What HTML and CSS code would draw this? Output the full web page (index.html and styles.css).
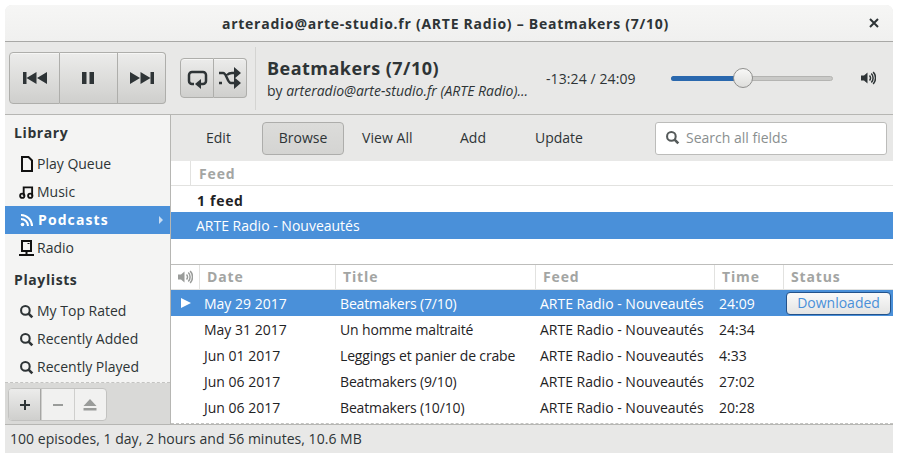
FILE: index.html
```html
<!DOCTYPE html>
<html lang="en">
<head>
<meta charset="utf-8">
<title>Rhythmbox</title>
<link rel="stylesheet" href="styles.css">
</head>
<body>
<svg class="defs" width="0" height="0">
  <symbol id="i-search" viewBox="0 0 16 16"><circle cx="6.8" cy="6.8" r="4.6" fill="none" stroke="currentColor" stroke-width="2.2"/><path d="M10.2 10.2l4 4" stroke="currentColor" stroke-width="2.8" fill="none"/></symbol>
  <symbol id="i-vol" viewBox="0 0 16 16"><path d="M1 5.5h3L7.5 2.5v11L4 10.500H1z" fill="currentColor"/><path d="M9.500 5.500a3.500 3.500 0 0 1 0 5M11.300 3.500a6.500 6.500 0 0 1 0 9M13.200 2a9 9 0 0 1 0 12" fill="none" stroke="currentColor" stroke-width="1.500"/></symbol>
</svg>
<div class="window">
  <header class="titlebar">
    <span class="title-text">arteradio@arte-studio.fr (ARTE Radio) – Beatmakers (7/10)</span>
    <svg class="close" width="10" height="10" viewBox="0 0 10 10"><path d="M1 1l8 8M9 1l-8 8" stroke="#2e3436" stroke-width="2"/></svg>
  </header>
  <section class="toolbar">
    <div class="btn-group transport">
      <button class="btn big w50"><svg width="24" height="12" viewBox="0 0 24 12"><path d="M0 0h3.500v12H0zM3.500 6l10-6v12zM14 6l10-6v12z" fill="#2e3436"/></svg></button>
      <button class="btn big w58"><svg width="12" height="12" viewBox="0 0 12 12"><path d="M0 0h4.500v12H0zM7.500 0H12v12H7.500z" fill="#2e3436"/></svg></button>
      <button class="btn big w50"><svg width="24" height="12" viewBox="0 0 24 12"><path d="M0 0l10 6-10 6zM10.500 0l10 6-10 6zM20.500 0H24v12h-3.500z" fill="#2e3436"/></svg></button>
    </div>
    <div class="btn-group modes">
      <button class="btn mode w34"><svg width="21" height="21" viewBox="0 0 21 21"><path d="M7 16H5a3 3 0 0 1-3-3V7a3 3 0 0 1 3-3h11a3 3 0 0 1 3 3v6a3 3 0 0 1-3 3h-3" fill="none" stroke="#2e3436" stroke-width="2.500"/><path d="M14 11v10l-6-5z" fill="#2e3436"/></svg></button>
      <button class="btn mode w33"><svg width="22" height="22" viewBox="0 0 22 22"><path d="M0 6h4c4 0 4 10 8 10h4M0 16h3M8 8c1-1 2-2 5-2h3" fill="none" stroke="#2e3436" stroke-width="2.400"/><path d="M15 0l7 6-7 6zM15 10l7 6-7 6z" fill="#2e3436"/></svg></button>
    </div>
    <div class="vsep"></div>
    <div class="now">
      <div class="now-title">Beatmakers (7/10)</div>
      <div class="now-sub">by <em>arteradio@arte-studio.fr (ARTE Radio)...</em></div>
    </div>
    <div class="time">-13:24 / 24:09</div>
    <div class="slider"><div class="slider-fill"></div><div class="slider-knob"></div></div>
    <svg class="vol" width="16" height="16"><use href="#i-vol"/></svg>
  </section>
  <div class="middle">
    <aside class="sidebar">
      <div class="side-list">
        <div class="side-head first">Library</div>
        <div class="side-item"><svg width="15" height="16" viewBox="0 0 15 16"><path d="M3 1h6.500L13 4.500V15H3z" fill="none" stroke="#111" stroke-width="2"/></svg>Play Queue</div>
        <div class="side-item"><svg width="15" height="16" viewBox="0 0 16 16"><circle cx="3.500" cy="12" r="2.300" fill="none" stroke="#111" stroke-width="2"/><circle cx="12" cy="12" r="2.300" fill="none" stroke="#111" stroke-width="2"/><path d="M5 12V3h9v9" fill="none" stroke="#111" stroke-width="2"/></svg>Music</div>
        <div class="side-item selected"><svg width="14" height="14" viewBox="0 0 14 14"><circle cx="2.500" cy="11.500" r="1.800" fill="#fff"/><path d="M1 6a7 7 0 0 1 7 7M1 2a11 11 0 0 1 11 11" fill="none" stroke="#fff" stroke-width="2"/></svg><b>Podcasts</b><span class="arrow"></span></div>
        <div class="side-item"><svg width="15" height="16" viewBox="0 0 15 16"><path d="M3 1h9v10H3z" fill="none" stroke="#111" stroke-width="2"/><path d="M0 15h15M7.500 12v3" stroke="#111" stroke-width="2"/><path d="M8.500 3.500h2" stroke="#111"/></svg>Radio</div>
        <div class="side-head second">Playlists</div>
        <div class="side-item"><svg class="s-ic" width="15" height="15"><use href="#i-search"/></svg>My Top Rated</div>
        <div class="side-item"><svg class="s-ic" width="15" height="15"><use href="#i-search"/></svg>Recently Added</div>
        <div class="side-item"><svg class="s-ic" width="15" height="15"><use href="#i-search"/></svg>Recently Played</div>
      </div>
      <div class="side-tools">
        <div class="tool-group">
          <button class="tool on"><svg width="12" height="12" viewBox="0 0 12 12"><path d="M6 1v10M1 6h10" stroke="#2e3436" stroke-width="2"/></svg></button>
          <button class="tool"><svg width="12" height="12" viewBox="0 0 12 12"><path d="M1 6h10" stroke="#9a9c9a" stroke-width="2"/></svg></button>
          <button class="tool"><svg width="14" height="12" viewBox="0 0 14 12"><path d="M7 0l6.500 7H.5zM.5 9h13v2.500H.5z" fill="#9a9c9a"/></svg></button>
        </div>
      </div>
    </aside>
    <main class="content">
      <div class="browse-bar">
        <nav class="tabs">
          <span class="tab t-edit">Edit</span>
          <span class="tab active">Browse</span>
          <span class="tab t-all">View All</span>
          <span class="tab t-add">Add</span>
          <span class="tab t-upd">Update</span>
        </nav>
        <div class="search"><svg width="15" height="15"><use href="#i-search"/></svg><span>Search all fields</span></div>
      </div>
      <div class="feed-pane">
        <div class="feed-head"><span class="fh-blank"></span><span class="col-title">Feed</span></div>
        <div class="feed-row count">1 feed</div>
        <div class="feed-row picked">ARTE Radio - Nouveautés</div>
      </div>
      <div class="tracks">
        <div class="tr head">
          <span class="c c0"><svg width="16" height="16"><use href="#i-vol"/></svg></span>
          <span class="c c1 col-title">Date</span><span class="c c2 col-title">Title</span><span class="c c3 col-title">Feed</span><span class="c c4 col-title">Time</span><span class="c c5 col-title">Status</span>
        </div>
        <div class="tr row playing">
          <span class="c c0"><svg width="10" height="10" viewBox="0 0 10 10"><path d="M0 0l10 5-10 5z" fill="#fff"/></svg></span>
          <span class="c c1">May 29 2017</span><span class="c c2">Beatmakers (7/10)</span><span class="c c3">ARTE Radio - Nouveautés</span><span class="c c4">24:09</span><span class="c c5"><span class="status-btn">Downloaded</span></span>
        </div>
        <div class="tr row"><span class="c c0"></span><span class="c c1">May 31 2017</span><span class="c c2">Un homme maltraité</span><span class="c c3">ARTE Radio - Nouveautés</span><span class="c c4">24:34</span><span class="c c5"></span></div>
        <div class="tr row"><span class="c c0"></span><span class="c c1">Jun 01 2017</span><span class="c c2">Leggings et panier de crabe</span><span class="c c3">ARTE Radio - Nouveautés</span><span class="c c4">4:33</span><span class="c c5"></span></div>
        <div class="tr row"><span class="c c0"></span><span class="c c1">Jun 06 2017</span><span class="c c2">Beatmakers (9/10)</span><span class="c c3">ARTE Radio - Nouveautés</span><span class="c c4">27:02</span><span class="c c5"></span></div>
        <div class="tr row"><span class="c c0"></span><span class="c c1">Jun 06 2017</span><span class="c c2">Beatmakers (10/10)</span><span class="c c3">ARTE Radio - Nouveautés</span><span class="c c4">20:28</span><span class="c c5"></span></div>
      </div>
    </main>
  </div>
  <footer class="statusbar">100 episodes, 1 day, 2 hours and 56 minutes, 10.6 MB</footer>
</div>
</body>
</html>
```
FILE: styles.css
```css
* { box-sizing: border-box; }
html, body { margin: 0; padding: 0; background: #fff; }
body { width: 902px; height: 462px; padding: 5px 9px 9px 5px; overflow: hidden; font-family: "Open Sans", "Noto Sans", sans-serif; font-size: 14px; color: #2e3436; }
.defs { position: absolute; }
.window { width: 888px; height: 448px; display: flex; flex-direction: column; background: #e8e8e7; border-radius: 7px 7px 0 0; overflow: hidden; }
button { font: inherit; padding: 0; margin: 0; }

.titlebar { height: 37px; flex: none; display: flex; align-items: center; justify-content: center; position: relative; background: linear-gradient(#f6f6f5, #f0f0ef); border-bottom: 1px solid #a8a8a6; }
.title-text { font-family: "Open Sans", sans-serif; font-weight: 700; font-size: 14px; color: #2e3436; letter-spacing: .74px; margin-right: 7px; }
.close { position: absolute; right: 14px; top: 13px; }

.toolbar { height: 73px; flex: none; display: flex; align-items: center; padding-left: 4px; background: #e8e8e7; border-bottom: 1px solid #b6b6b3; }
.btn-group { display: flex; flex: none; }
.btn { display: flex; align-items: center; justify-content: center; background: linear-gradient(#ececeb, #dcdcda 55%, #cfcfcd); border: 1px solid #aeaeab; border-left-width: 0; box-shadow: inset 0 1px #f6f6f5; }
.btn:first-child { border-left-width: 1px; border-radius: 4px 0 0 4px; }
.btn:last-child { border-radius: 0 4px 4px 0; }
.big { height: 52px; }
.mode { height: 40px; }
.w50 { width: 51px; }
.w58 { width: 58px; padding-right: 1px; }
.big.w50:last-child { width: 48px; }
.w34 { width: 34px; }
.w33 { width: 33px; }
.modes { margin-left: 14px; }
.vsep { width: 1px; height: 63px; background: #d4d4d2; margin-left: 8px; }
.now { width: 290px; padding-left: 11px; flex: none; white-space: nowrap; }
.now-title { font-family: "Open Sans", sans-serif; font-weight: 700; font-size: 18px; line-height: 24px; letter-spacing: .47px; color: #2e3436; margin-top: 1px; }
.now-sub { font-size: 14px; line-height: 20px; letter-spacing: -.01px; color: #2e3436; margin-top: 1px; }
.time { width: 125px; flex: none; font-size: 14px; color: #2e3436; letter-spacing: .1px; padding-top: 1px; }
.slider { position: relative; width: 162px; height: 5px; flex: none; background: #c9c9c7; border: 1px solid #b4b4b2; border-radius: 3px; }
.slider-fill { position: absolute; left: -1px; top: -1px; height: 5px; width: 66px; background: #2a68ae; border-radius: 3px 0 0 3px; }
.slider-knob { position: absolute; left: 61px; top: -9px; width: 20px; height: 20px; border-radius: 50%; background: linear-gradient(#f8f8f7, #dededc); border: 1px solid #8f8f8d; }
.vol { margin-left: 27px; color: #2e3436; flex: none; }

.middle { flex: 1; display: flex; min-height: 0; }
.sidebar { width: 166px; flex: none; display: flex; flex-direction: column; background: #f4f4f3; border-right: 1px solid #b6b6b3; }
.side-list { flex: 1; border-bottom: 1px dashed #c4c4c2; }
.side-head { font-family: "Open Sans", sans-serif; font-weight: 700; font-size: 14px; letter-spacing: .6px; height: 28px; line-height: 28px; padding-left: 9px; color: #2e3436; margin-top: 4px; }
.side-head.first { margin-top: 4px; height: 31px; line-height: 27px; }
.side-head.second { margin-top: 5px; height: 30px; line-height: 26px; }
.side-item { height: 28px; display: flex; align-items: center; gap: 3px; padding-left: 14px; color: #2e3436; position: relative; line-height: 1; }
.side-item svg { flex: none; }
.side-item .s-ic { color: #2e3436; }
.side-item.selected { background: #4a90d9; color: #fff; padding-left: 15px; gap: 4px; }
.side-item b { font-family: "Open Sans", sans-serif; font-size: 14px; font-weight: 700; letter-spacing: 1.1px; }
.arrow { position: absolute; right: 7px; top: 10px; border-left: 4px solid #c8dcf2; border-top: 4px solid transparent; border-bottom: 4px solid transparent; }
.side-tools { height: 41px; flex: none; background: #d9d9d7; padding: 5px 0 0 3px; }
.tool-group { display: flex; width: 99px; height: 33px; border: 1px solid #c2c2c0; border-radius: 4px; overflow: hidden; background: #f1f1f0; }
.tool { flex: 1; display: flex; align-items: center; justify-content: center; background: transparent; border: 0; border-left: 1px solid #cfcfcd; }
.tool:first-child { border-left: 0; }
.tool.on { background: linear-gradient(#ececeb, #cfcfcd); border-right: 1px solid #a6a6a4; }

.content { flex: 1; min-width: 0; display: flex; flex-direction: column; background: #fff; border-bottom: 1px dashed #c4c4c2; }
.browse-bar { height: 46px; flex: none; display: flex; align-items: center; justify-content: space-between; padding: 0 6px 0 0; background: #e8e8e7; }
.tabs { display: flex; align-items: center; padding-left: 35px; }
.tab { height: 33px; line-height: 31px; color: #2e3436; flex: none; }
.t-edit { width: 56px; }
.active { width: 82px; line-height: 29px; text-align: center; background: linear-gradient(#dcdcda, #d4d4d2); border: 1px solid #adadab; border-radius: 4px; margin-right: 18px; }
.t-all { width: 98px; letter-spacing: .05px; }
.t-add { width: 75px; }
.search { width: 232px; height: 33px; display: flex; align-items: center; gap: 6px; padding-left: 9px; padding-bottom: 1px; background: #fff; border: 1px solid #bcbcba; border-radius: 3px; color: #8a8f8f; }
.search svg { color: #555a5a; flex: none; }

.feed-pane { height: 104px; flex: none; border-bottom: 1px solid #bdbdbb; }
.col-title { font-family: "Open Sans", sans-serif; font-weight: 700; font-size: 14px; color: #a3a5a3; letter-spacing: .85px; }
.feed-head { height: 25px; display: flex; align-items: center; border-bottom: 1px solid #e2e2e0; }
.fh-blank { width: 20px; height: 100%; border-right: 1px solid #e2e2e0; margin-right: 8px; }
.feed-row { line-height: 26px; height: 26px; padding-left: 26px; }
.count { font-family: "Open Sans", sans-serif; font-weight: 700; font-size: 14px; letter-spacing: .7px; color: #1f2325; line-height: 29px; }
.picked { background: #4a90d9; color: #fff; height: 27px; line-height: 27px; padding-left: 25px; }

.tr { display: flex; height: 26px; align-items: center; color: #1f2325; }
.head { height: 25px; border-bottom: 1px solid #e2e2e0; }
.head .c { height: 100%; display: flex; align-items: center; border-left: 1px solid #e2e2e0; padding: 0 0 2px 7px; }
.head .c0 { border-left: 0; padding: 0 0 0 6px; color: #9a9c9a; }
.c { flex: none; white-space: nowrap; }
.c0 { width: 28px; padding-left: 10px; display: flex; align-items: center; }
.c1 { width: 136px; padding-left: 5px; }
.c2 { width: 200px; padding-left: 5px; }
.c3 { width: 179px; padding-left: 5px; }
.c4 { width: 69px; padding-left: 5px; }
.c5 { flex: 1; }
.row .c2 { letter-spacing: -.15px; }
.playing { background: #4a90d9; color: #fff; }
.status-btn { display: block; width: 105px; height: 23px; margin-left: 3px; line-height: 20px; text-align: center; color: #4a90d9; background: linear-gradient(#fafafa, #e4e4e3); border: 1px solid #23528a; border-radius: 4px; }

.statusbar { height: 29px; flex: none; line-height: 28px; padding-left: 5px; background: #e8e8e7; border-top: 1px solid #b6b6b3; color: #2e3436; letter-spacing: .03px; }
```
